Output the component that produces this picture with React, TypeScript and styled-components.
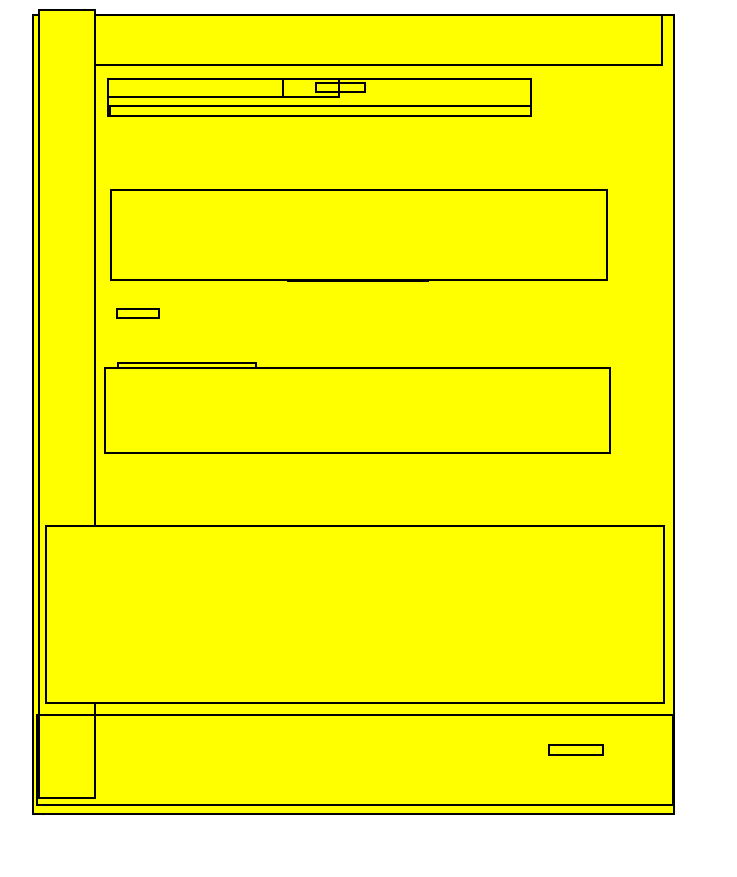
import React from 'react';
import styled, { createGlobalStyle } from 'styled-components';

const YELLOW = '#ffff00';
const LINE = '2px solid #000';

const GlobalStyle = createGlobalStyle`
  html, body {
    margin: 0;
    padding: 0;
    background: #fff;
    font-family: 'Liberation Sans', Arial, sans-serif;
  }
  *, *::before, *::after {
    box-sizing: border-box;
  }
`;

const Frame = styled.div`
  position: relative;
  margin: 14px 0 0 32px;
  width: 643px;
  height: 801px;
  border: ${LINE};
  background: ${YELLOW};
`;

// rail sits over the header and frame edge
const Rail = styled.aside`
  position: absolute;
  left: 4px;
  top: -7px;
  width: 58px;
  height: 790px;
  border: ${LINE};
  background: ${YELLOW};
`;

const Column = styled.main`
  display: flex;
  flex-direction: column;
  align-items: flex-start;

  & > * {
    flex-shrink: 0;
  }
`;

const Header = styled.header`
  margin: -2px 0 0 10px;
  width: 619px;
  height: 52px;
  border: ${LINE};
  background: ${YELLOW};
`;

const FormPanel = styled.form`
  margin: 12px 0 0 73px;
  width: 425px;
  height: 39px;
  border: ${LINE};
`;

const FieldRow = styled.div`
  display: flex;
  align-items: flex-start;
  margin: -2px 0 0 -2px;
  height: 20px;
`;

const Field = styled.div`
  flex-shrink: 0;
  width: 233px;
  height: 20px;
  border: ${LINE};
`;

const FieldLabel = styled.div`
  margin: -2px 0 0 -2px;
  width: 177px;
  height: 20px;
  border: ${LINE};
`;

const Chip = styled.span`
  flex-shrink: 0;
  margin: 4px 0 0 -25px;
  width: 51px;
  height: 11px;
  border: ${LINE};
`;

const FieldFooter = styled.div`
  margin-top: 7px;
  width: 423px;
  height: 12px;
  border: ${LINE};
`;

const Tab = styled.div`
  margin: 125px 0 0 253px;
  width: 142px;
  height: 40px;
  border: ${LINE};
`;

const Card = styled.section<{ $x: number; $y: number; $w: number; $h: number }>`
  margin: ${(p) => p.$y}px 0 0 ${(p) => p.$x}px;
  width: ${(p) => p.$w}px;
  height: ${(p) => p.$h}px;
  border: ${LINE};
  background: ${YELLOW};
`;

const Tag = styled.span<{ $x: number; $y: number; $w: number; $h: number }>`
  display: block;
  margin: ${(p) => p.$y}px 0 0 ${(p) => p.$x}px;
  width: ${(p) => p.$w}px;
  height: ${(p) => p.$h}px;
  border: ${LINE};
`;

const Panel = styled.section`
  position: relative;
  margin: 71px 0 0 11px;
  width: 620px;
  height: 179px;
  border: ${LINE};
  background: ${YELLOW};
`;

const Footer = styled.footer`
  position: relative;
  display: flex;
  justify-content: flex-end;
  align-items: flex-start;
  margin: 10px 0 0 2px;
  padding: 28px 68px 0 0;
  width: 638px;
  height: 92px;
  border: ${LINE};
`;

const FooterButton = styled.button`
  width: 56px;
  height: 12px;
  padding: 0;
  border: ${LINE};
  background: transparent;
`;

export default function App() {
  return (
    <>
      <GlobalStyle />
      <Frame>
        <Rail />
        <Column>
          <Header />
          <FormPanel>
            <FieldRow>
              <Field>
                <FieldLabel />
              </Field>
              <Chip />
            </FieldRow>
            <FieldFooter />
          </FormPanel>
          <Tab />
          <Card $x={76} $y={-93} $w={498} $h={92} />
          <Tag $x={82} $y={27} $w={44} $h={11} />
          <Tag $x={83} $y={43} $w={140} $h={20} />
          <Card $x={70} $y={-15} $w={507} $h={87} />
          <Panel />
          <Footer>
            <FooterButton type="button" />
          </Footer>
        </Column>
      </Frame>
    </>
  );
}
